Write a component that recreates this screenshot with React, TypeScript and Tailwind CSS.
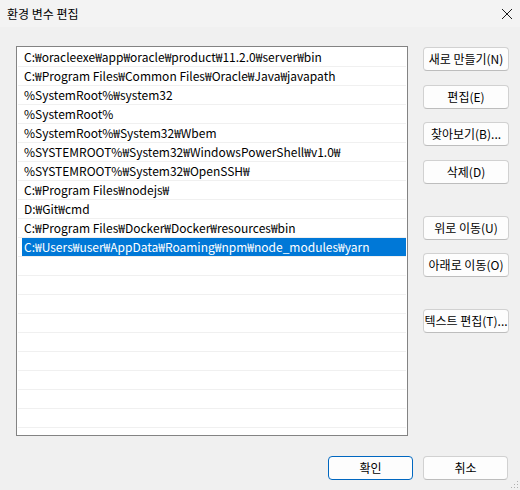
import React from "react";

const rows = [
  "C:₩oracleexe₩app₩oracle₩product₩11.2.0₩server₩bin",
  "C:₩Program Files₩Common Files₩Oracle₩Java₩javapath",
  "%SystemRoot%₩system32",
  "%SystemRoot%",
  "%SystemRoot%₩System32₩Wbem",
  "%SYSTEMROOT%₩System32₩WindowsPowerShell₩v1.0₩",
  "%SYSTEMROOT%₩System32₩OpenSSH₩",
  "C:₩Program Files₩nodejs₩",
  "D:₩Git₩cmd",
  "C:₩Program Files₩Docker₩Docker₩resources₩bin",
  "C:₩Users₩user₩AppData₩Roaming₩npm₩node_modules₩yarn",
  "", "", "", "", "", "", "", "", "",
];

const font = { fontFamily: '"Noto Sans CJK KR", "Noto Sans", sans-serif' };

function Btn({ label, className = "" }: { label: string; className?: string }) {
  return (
    <div
      className={
        "w-[86px] h-[24px] flex items-center justify-center rounded-[4px] border border-[#d1d1d1] border-b-[#bdbdbd] bg-[#fdfdfd] text-[12px] text-black " +
        className
      }
    >
      {label}
    </div>
  );
}

export default function App() {
  return (
    <div className="w-[520px] h-[490px] bg-[#f0f0f0] flex flex-col relative" style={font}>
      <div className="h-[27px] bg-[#f3f3f3] flex items-center justify-between pl-[7px] pr-[6px]">
        <span className="text-[12px] text-black">환경 변수 편집</span>
        <svg width="12" height="12" viewBox="0 0 12 12" className="mr-[1px]">
          <path d="M1 1 L11 11 M11 1 L1 11" stroke="#1a1a1a" strokeWidth="1" fill="none" />
        </svg>
      </div>
      <div className="flex flex-col pl-[16px] pt-[19px]">
        <div className="flex">
          <div className="w-[392px] h-[390px] border border-[#838383] bg-white pt-[1px] overflow-hidden">
            {rows.map((r, i) => (
              <div key={i} className="mx-[1px] h-[19px] border-b border-[#f0f0f0]">
                <div
                  className={
                    "ml-[4px] h-[18px] pl-[2px] text-[12px] leading-[18px] whitespace-nowrap " +
                    (i === 10 ? "bg-[#0078d7] text-white" : "text-black")
                  }
                >
                  {r}
                </div>
              </div>
            ))}
          </div>
          <div className="ml-[15px] flex flex-col">
            <Btn label="새로 만들기(N)" className="mt-[1px]" />
            <Btn label="편집(E)" className="mt-[14px]" />
            <Btn label="찾아보기(B)..." className="mt-[13px]" />
            <Btn label="삭제(D)" className="mt-[14px]" />
            <Btn label="위로 이동(U)" className="mt-[32px]" />
            <Btn label="아래로 이동(O)" className="mt-[13px]" />
            <Btn label="텍스트 편집(T)..." className="mt-[32px]" />
          </div>
        </div>
        <div className="flex justify-end gap-[10px] pr-[12px] mt-[20px]">
          <div className="w-[85px] h-[24px] flex items-center justify-center rounded-[4px] border border-[#0067c0] bg-[#fdfdfd] text-[12px] text-black">
            확인
          </div>
          <div className="w-[85px] h-[24px] flex items-center justify-center rounded-[4px] border border-[#d1d1d1] border-b-[#bdbdbd] bg-[#fdfdfd] text-[12px] text-black">
            취소
          </div>
        </div>
      </div>
      <svg width="8" height="8" viewBox="0 0 8 8" className="absolute right-[1px] bottom-[1px]">
        <rect x="6" y="0" width="1" height="1" fill="#b0b0b0" />
        <rect x="3" y="3" width="1" height="1" fill="#b0b0b0" />
        <rect x="6" y="3" width="1" height="1" fill="#b0b0b0" />
        <rect x="0" y="6" width="1" height="1" fill="#b0b0b0" />
        <rect x="3" y="6" width="1" height="1" fill="#b0b0b0" />
        <rect x="6" y="6" width="1" height="1" fill="#b0b0b0" />
      </svg>
    </div>
  );
}
